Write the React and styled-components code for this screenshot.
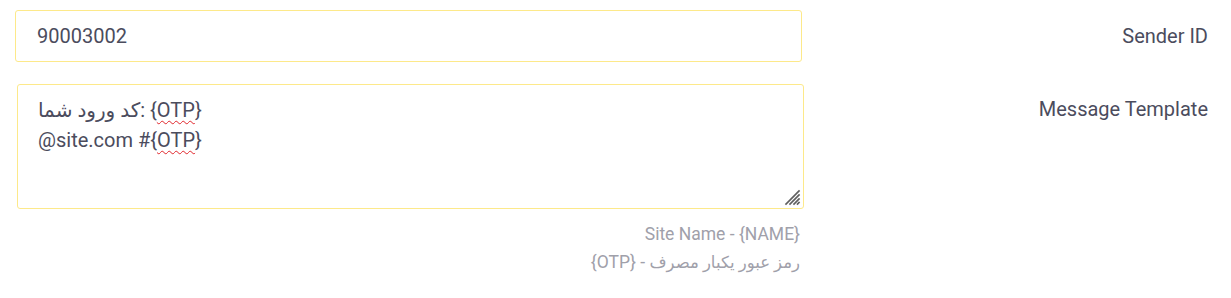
import React from "react";
import styled, { createGlobalStyle } from "styled-components";

const Global = createGlobalStyle`
  html, body { margin: 0; padding: 0; background: #ffffff; }
  body { font-family: Roboto, "DejaVu Sans", sans-serif; }
`;

const Form = styled.div`
  direction: rtl;
  width: 1231px;
  box-sizing: border-box;
  padding: 10px 23px 0 15px;
  display: flex;
  flex-direction: column;
  gap: 22px;
`;

const Row = styled.div`
  display: flex;
  align-items: flex-start;
`;

const Label = styled.div`
  flex: 1;
  text-align: right;
  font-size: 20px;
  line-height: 30px;
  color: #4b4c5d;
  padding-top: ${(p) => p.$top}px;
`;

const Field = styled.div`
  width: 789px;
  display: flex;
  flex-direction: column;
  align-items: stretch;
`;

const TextInput = styled.div`
  direction: ltr;
  box-sizing: border-box;
  width: 787px;
  height: 52px;
  margin-right: 2px;
  border: 1px solid #fde98a;
  border-radius: 3px;
  padding: 0 21px;
  display: flex;
  align-items: center;
  font-size: 20px;
  color: #4b4c5d;
`;

const TextArea = styled.div`
  position: relative;
  direction: ltr;
  box-sizing: border-box;
  width: 787px;
  height: 125px;
  border: 1px solid #fde98a;
  border-radius: 3px;
  padding: 10px 20px;
  font-size: 20px;
  line-height: 30px;
  color: #4b4c5d;
  white-space: pre-wrap;
`;

const Squiggle = styled.span`
  text-decoration: underline wavy #e0262b;
  text-decoration-thickness: 1px;
  text-underline-offset: 3px;
`;

const Grip = styled.svg`
  position: absolute;
  right: 1px;
  bottom: 1px;
  width: 19px;
  height: 19px;
`;

const Hints = styled.div`
  margin-top: 11px;
  padding-right: 4px;
  text-align: right;
  font-size: 17.5px;
  line-height: 28px;
  color: #a0a0aa;
`;

const Persian = styled.span`
  font-size: 16.5px;
`;

export default function App() {
  return (
    <>
      <Global />
      <Form>
        <Row>
          <Label $top={11}>Sender ID</Label>
          <Field>
            <TextInput>90003002</TextInput>
          </Field>
        </Row>
        <Row>
          <Label $top={10}>Message Template</Label>
          <Field>
            <TextArea>
              {"کد ورود شما: {"}
              <Squiggle>OTP</Squiggle>
              {"}\n@site.com #{"}
              <Squiggle>OTP</Squiggle>
              {"}"}
              <Grip viewBox="0 0 19 19">
                <g stroke="#5f5f5f" strokeWidth="1.7" strokeLinecap="square">
                  <line x1="3" y1="16" x2="16" y2="3" />
                  <line x1="7" y1="16" x2="16" y2="7" />
                  <line x1="11" y1="16" x2="16" y2="11" />
                  <line x1="14.5" y1="16" x2="16" y2="14.5" />
                </g>
              </Grip>
            </TextArea>
            <Hints>
              <div>Site Name - {"{NAME}"}</div>
              <div>
                <Persian>رمز عبور یکبار مصرف</Persian> - {"{OTP}"}
              </div>
            </Hints>
          </Field>
        </Row>
      </Form>
    </>
  );
}
